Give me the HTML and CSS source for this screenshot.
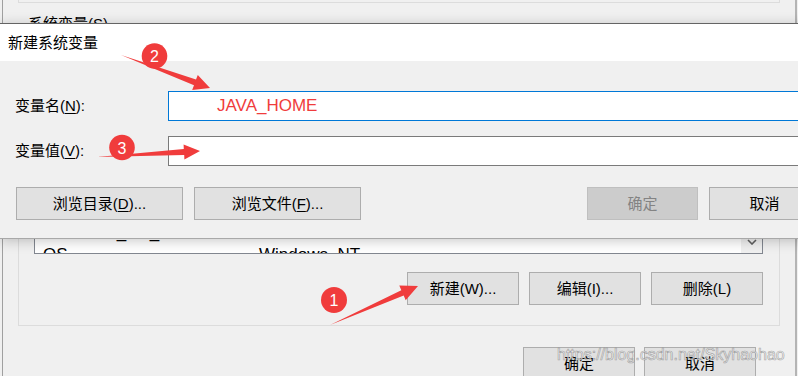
FILE: index.html
```html
<!DOCTYPE html>
<html lang="zh">
<head>
<meta charset="utf-8">
<title>新建系统变量</title>
<link rel="stylesheet" href="styles.css">
</head>
<body>
<div class="stage">
  <div class="back">
    <div class="prev-group"></div>
    <div class="legend">系统变量(<u>S</u>)</div>
    <div class="group">
      <div class="list">
        <div class="rows">
          <div class="row-item"><span class="c1">NUMBER_OF_PROCESSORS</span><span class="c2">4</span></div>
          <div class="row-item last"><span class="c1">OS</span><span class="c2">Windows_NT</span></div>
        </div>
        <div class="scroll">
          <svg class="chev" width="10" height="6" viewBox="0 0 10 6"><path d="M1 1 L5 5 L9 1" fill="none" stroke="#606060" stroke-width="1.6"/></svg>
        </div>
      </div>
      <div class="actions">
        <button class="btn w112">新建(W)...</button>
        <button class="btn w112">编辑(I)...</button>
        <button class="btn w112">删除(L)</button>
      </div>
    </div>
    <div class="footer">
      <button class="btn w112">确定</button>
      <button class="btn w112">取消</button>
    </div>
  </div>

  <div class="dlg">
    <div class="title">新建系统变量</div>
    <div class="dbody">
      <div class="frow">
        <label class="lbl">变量名(<u>N</u>):</label>
        <div class="field focus"><span class="val">JAVA_HOME</span></div>
      </div>
      <div class="frow second">
        <label class="lbl">变量值(<u>V</u>):</label>
        <div class="field"></div>
      </div>
      <div class="brow">
        <button class="btn wide">浏览目录(<u>D</u>)...</button>
        <button class="btn wide second-wide">浏览文件(<u>F</u>)...</button>
        <button class="btn mid disabled push">确定</button>
        <button class="btn mid">取消</button>
      </div>
    </div>
  </div>

  <div class="watermark">https://blog.csdn.net/Skyhaohao</div>

  <svg class="notes" width="798" height="376" viewBox="0 0 798 376">
    <g fill="#f03c3c">
      <polygon points="121,55 196,79.6 197.8,74.9 210,88 192.2,89.9 194,85.2"/>
      <polygon points="97,157 183.8,148.9 183.6,144.4 200,151 184.4,159.4 184.2,154.9"/>
      <polygon points="330,325 401.3,290.2 399.3,285.6 418,286 405.7,300.2 403.7,295.6"/>
      <circle cx="154.5" cy="56" r="12.8"/>
      <circle cx="122" cy="147.5" r="12.8"/>
      <circle cx="334" cy="300" r="13"/>
    </g>
    <g fill="#fff" font-family="Liberation Sans, Arial, sans-serif" font-size="16" text-anchor="middle">
      <text x="154.5" y="62">2</text>
      <text x="122" y="153.5">3</text>
      <text x="334" y="306">1</text>
    </g>
  </svg>
</div>
</body>
</html>
```
FILE: styles.css
```css
* { box-sizing: border-box; }
html, body { margin: 0; padding: 0; }
body {
  width: 798px;
  height: 376px;
  overflow: hidden;
  background: #f0f0f0;
  font-family: "Liberation Sans", "Noto Sans CJK SC", sans-serif;
  font-size: 15px;
  line-height: 20px;
  color: #000;
}
u { text-decoration: underline; text-underline-offset: 2px; }

.stage { position: relative; width: 798px; height: 376px; overflow: hidden; }

/* background window */
.back {
  margin-left: 2px;
  width: 795px;
  height: 376px;
  border-left: 1px solid #a0a0a0;
  border-right: 2px solid #b4b4b4;
  background: #f0f0f0;
}
.prev-group {
  margin-left: 15px;
  width: 762px;
  height: 3px;
  border: 1px solid #dcdcdc;
  border-top: none;
}
.legend {
  margin-top: 11px;
  padding-left: 25px;
  height: 20px;
}
.group {
  margin-left: 15px;
  width: 762px;
  height: 292px;
  border: 1px solid #dcdcdc;
  border-top: none;
  padding: 6px 16px 0 15px;
}
.list {
  height: 214px;
  border: 1px solid #828790;
  background: #fff;
  display: flex;
  overflow: hidden;
}
.rows {
  flex: 1;
  display: flex;
  flex-direction: column;
  justify-content: flex-end;
  overflow: hidden;
}
.row-item {
  display: flex;
  height: 22px;
  padding-left: 8px;
  font-size: 17px;
  line-height: 22px;
}
.row-item.last { margin-bottom: -13px; }
.c1 { width: 216px; }
.scroll {
  width: 21px;
  background: #f0f0f0;
  display: flex;
  align-items: flex-end;
  justify-content: center;
  padding-bottom: 8px;
}
.actions {
  display: flex;
  justify-content: flex-end;
  gap: 10px;
  margin-top: 18px;
}
.footer {
  display: flex;
  justify-content: flex-end;
  gap: 9px;
  margin-top: 21px;
  padding-right: 39px;
}

.btn {
  height: 33px;
  margin: 0;
  padding: 0;
  background: #e1e1e1;
  border: 1px solid #adadad;
  font-family: inherit;
  font-size: 15px;
  line-height: 20px;
  color: #000;
}
.w112 { width: 112px; }
.wide { width: 167px; }
.mid { width: 111px; }
.btn.disabled {
  background: #cccccc;
  border-color: #bfbfbf;
  color: #838383;
}
.push { margin-left: auto; }

/* dialog */
.dlg {
  position: absolute;
  top: 23px;
  left: 0;
  width: 830px;
  background: #f0f0f0;
  border-top: 1px solid #646464;
  border-bottom: 1px solid #a8a8a8;
  box-shadow: 0 2px 12px rgba(0, 0, 0, 0.22);
}
.title {
  height: 37px;
  background: #fff;
  padding-left: 8px;
  display: flex;
  align-items: center;
}
.dbody { padding: 30px 10px 18px 0; }
.frow { display: flex; align-items: center; height: 30px; }
.frow.second { margin-top: 15px; }
.lbl { width: 168px; padding-left: 15px; }
.field {
  flex: 1;
  height: 30px;
  background: #fff;
  border: 1px solid #7a7a7a;
  display: flex;
  align-items: center;
  padding-left: 48px;
}
.field.focus { border-color: #0078d7; }
.val {
  color: #f03c3c;
  font-family: "Liberation Sans", Arial, sans-serif;
  font-size: 17px;
}
.brow {
  display: flex;
  margin-top: 21px;
  padding-left: 16px;
  gap: 11px;
}
.brow .second-wide { margin-left: 0; }

.watermark {
  position: absolute;
  left: 557px;
  top: 345px;
  font-family: "Liberation Sans", Arial, sans-serif;
  font-size: 16px;
  color: rgba(255, 255, 255, 0.75);
  -webkit-text-stroke: 0.7px rgba(100, 100, 100, 0.55);
  white-space: nowrap;
}
.notes { position: absolute; top: 0; left: 0; pointer-events: none; }
```
